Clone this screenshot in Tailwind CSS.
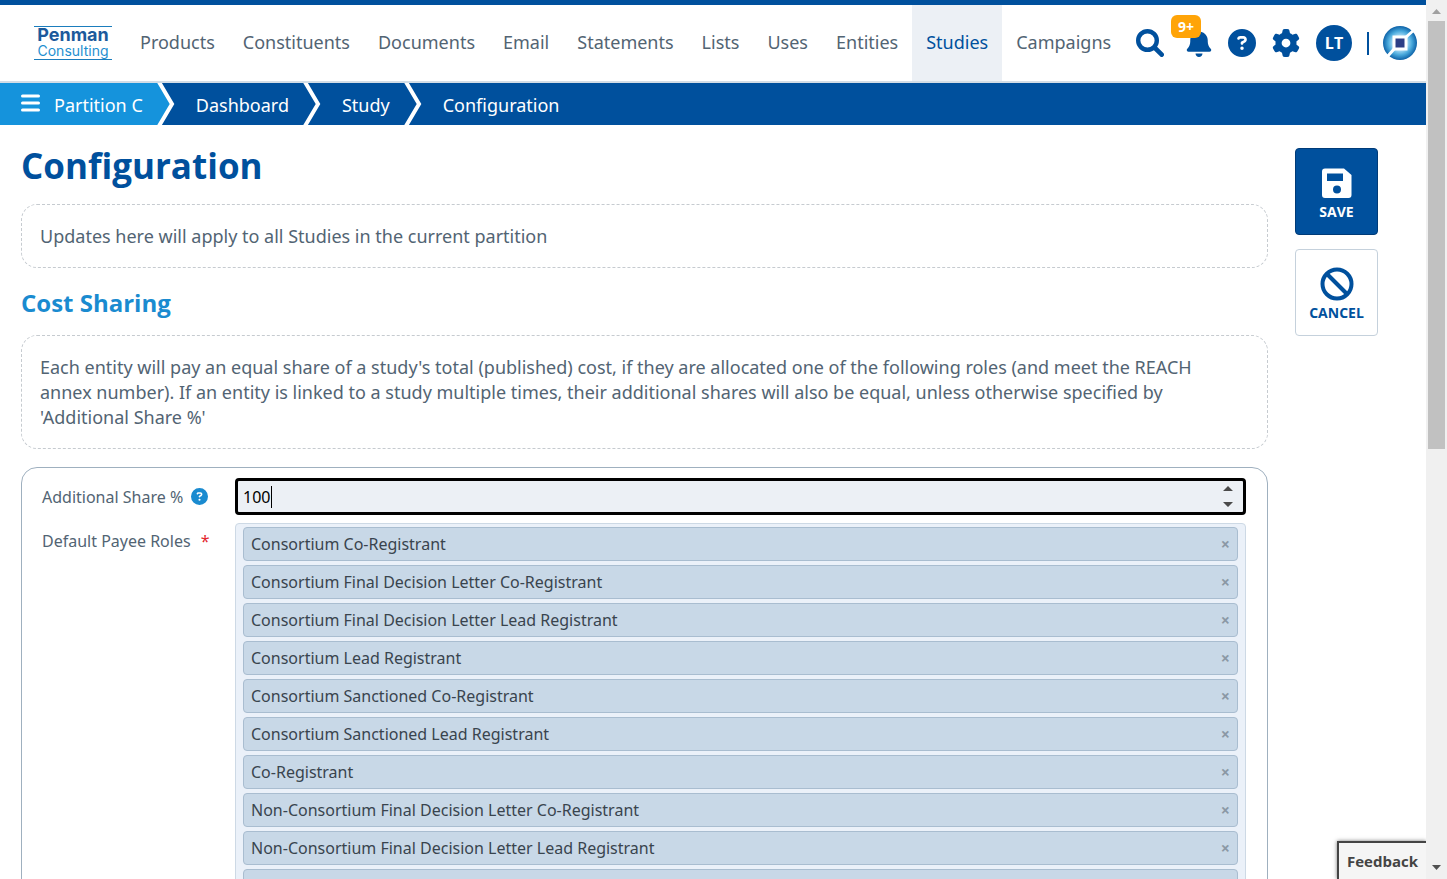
<!DOCTYPE html>
<html lang="en">
<head>
    <meta charset="UTF-8">
    <meta name="viewport" content="width=device-width, initial-scale=1.0">
    <title>Configuration</title>
    <script src="https://cdn.jsdelivr.net/npm/@tailwindcss/browser@4"></script>
    <style>
        input[type=number]::-webkit-inner-spin-button,
        input[type=number]::-webkit-outer-spin-button { -webkit-appearance: none; margin: 0; }
        input[type=number] { -moz-appearance: textfield; appearance: textfield; }
    </style>
</head>
<body class="flex h-screen overflow-hidden bg-white font-['Noto_Sans',sans-serif] text-lg text-[#526473]">
    <div class="relative flex h-screen min-w-0 flex-1 flex-col overflow-hidden">
        <!-- Top navigation -->
        <header class="flex h-[83px] shrink-0 items-stretch border-t-5 border-b-2 border-t-[#00509d] border-b-[#d3dde6]">
            <a href="#" class="mr-3.5 ml-[34px] flex h-[34px] w-[78px] flex-col justify-center self-center border-y border-[#1b7dbd] font-['Inter',sans-serif]">
                <span class="text-center text-lg leading-4 font-bold text-[#1c5a9c]">Penman</span>
                <span class="text-center text-sm leading-4 text-[#1f8fd0]">Consulting</span>
            </a>
            <nav class="flex">
                <a href="#" class="flex items-center px-3.5 pb-0.5">Products</a>
                <a href="#" class="flex items-center px-3.5 pb-0.5">Constituents</a>
                <a href="#" class="flex items-center px-3.5 pb-0.5">Documents</a>
                <a href="#" class="flex items-center px-3.5 pb-0.5">Email</a>
                <a href="#" class="flex items-center px-3.5 pb-0.5">Statements</a>
                <a href="#" class="flex items-center px-3.5 pb-0.5">Lists</a>
                <a href="#" class="flex items-center px-3.5 pb-0.5">Uses</a>
                <a href="#" class="flex items-center px-3.5 pb-0.5">Entities</a>
                <a href="#" class="flex items-center bg-[#ecf0f5] px-3.5 pb-0.5 text-[#00509d]">Studies</a>
                <a href="#" class="flex items-center px-3.5 pb-0.5">Campaigns</a>
            </nav>
            <div class="ml-auto flex items-center pr-[9px] font-['Open_Sans',sans-serif] text-[#00509d]">
                <button type="button" aria-label="Search" class="mr-[22px]">
                    <svg class="size-7" viewBox="0 0 28 28" fill="none" stroke="currentColor" stroke-linecap="round"><circle cx="11.500" cy="11.500" r="9.300" stroke-width="4.400"/><path d="M18.500 18.500L25.700 25.700" stroke-width="4.600"/></svg>
                </button>
                <button type="button" aria-label="Notifications" class="relative mr-4">
                    <svg class="h-7 w-[26px]" viewBox="0 0 448 512" fill="currentColor"><path d="M224 0c-17.700 0-32 14.300-32 32V51.200C119 66 64 130.600 64 208v18.800c0 47-17.300 92.400-48.500 127.600l-7.400 8.300c-8.400 9.400-10.400 22.900-5.300 34.400S19.400 416 32 416H416c12.600 0 24-7.400 29.200-18.900s3.100-25-5.300-34.400l-7.400-8.300C401.300 319.200 384 273.900 384 226.800V208c0-77.400-55-142-128-156.800V32c0-17.700-14.300-32-32-32zm45.300 493.300c12-12 18.700-28.300 18.700-45.300H160c0 17 6.700 33.300 18.700 45.300s28.300 18.700 45.300 18.700s33.300-6.700 45.300-18.700z"/></svg>
                    <span class="absolute -top-3.5 -left-[15px] rounded-md bg-[#ffa408] px-[7px] text-sm leading-[23px] font-bold text-white">9+</span>
                </button>
                <button type="button" aria-label="Help" class="mr-4">
                    <svg class="size-7" viewBox="0 0 512 512" fill="currentColor"><path d="M256 512A256 256 0 1 0 256 0a256 256 0 1 0 0 512zM169.800 165.300c7.900-22.300 29.100-37.300 52.800-37.300h58.300c34.900 0 63.100 28.300 63.100 63.100c0 22.600-12.100 43.500-31.700 54.800L280 264.400c-.2 13-10.900 23.600-24 23.600c-13.300 0-24-10.700-24-24V250.500c0-8.600 4.600-16.500 12.100-20.800l44.300-25.400c4.700-2.700 7.600-7.700 7.600-13.100c0-8.400-6.800-15.100-15.100-15.100H222.600c-3.400 0-6.400 2.100-7.500 5.300l-.4 1.200c-4.400 12.500-18.200 19-30.600 14.600s-19-18.200-14.600-30.600l.3-1.300zM224 352a32 32 0 1 1 64 0 32 32 0 1 1 -64 0z"/></svg>
                </button>
                <button type="button" aria-label="Settings" class="mr-4">
                    <svg class="size-7" viewBox="0 0 512 512" fill="currentColor"><path d="M495.900 166.600c3.200 8.700 .5 18.400-6.400 24.600l-43.300 39.400c1.100 8.300 1.700 16.800 1.700 25.400s-.6 17.100-1.700 25.400l43.300 39.400c6.900 6.200 9.600 15.900 6.400 24.600c-4.400 11.900-9.700 23.300-15.800 34.300l-4.700 8.100c-6.600 11-14 21.400-22.100 31.200c-5.900 7.200-15.700 9.600-24.500 6.800l-55.700-17.700c-13.400 10.300-28.200 18.900-44 25.400l-12.500 57.100c-2 9.100-9 16.300-18.200 17.800c-13.800 2.300-28 3.500-42.500 3.500s-28.700-1.200-42.500-3.500c-9.200-1.500-16.200-8.700-18.200-17.800l-12.500-57.100c-15.800-6.500-30.600-15.100-44-25.400L83.100 425.900c-8.800 2.800-18.600 .3-24.500-6.800c-8.100-9.800-15.500-20.200-22.100-31.200l-4.700-8.100c-6.100-11-11.400-22.400-15.800-34.300c-3.200-8.700-.5-18.400 6.400-24.600l43.300-39.400C64.600 273.100 64 264.600 64 256s.6-17.100 1.700-25.400L22.400 191.200c-6.900-6.200-9.600-15.900-6.400-24.600c4.400-11.900 9.700-23.300 15.800-34.300l4.700-8.100c6.600-11 14-21.400 22.100-31.200c5.900-7.200 15.700-9.600 24.500-6.800l55.700 17.700c13.400-10.300 28.200-18.900 44-25.400l12.500-57.100c2-9.100 9-16.300 18.200-17.800C227.300 1.200 241.500 0 256 0s28.700 1.200 42.500 3.500c9.200 1.500 16.200 8.700 18.200 17.800l12.500 57.100c15.800 6.500 30.600 15.100 44 25.400l55.700-17.700c8.800-2.800 18.600-.3 24.500 6.800c8.100 9.800 15.500 20.200 22.100 31.200l4.700 8.100c6.100 11 11.400 22.400 15.800 34.300zM256 336a80 80 0 1 0 0-160 80 80 0 1 0 0 160z"/></svg>
                </button>
                <button type="button" class="flex size-9 items-center justify-center rounded-full bg-[#00509d] text-base font-bold text-white">LT</button>
                <span class="mr-3.5 ml-[15px] h-[23px] w-0.5 bg-[#00509d]"></span>
                <a href="#" aria-label="Home">
                    <svg class="size-[34px]" viewBox="0 0 34 34">
                        <defs>
                            <radialGradient id="orb">
                                <stop offset="0.35" stop-color="#bfe6fa"/>
                                <stop offset="0.7" stop-color="#49a9dc"/>
                                <stop offset="1" stop-color="#0d62a8"/>
                            </radialGradient>
                        </defs>
                        <circle cx="17" cy="17" r="17" fill="url(#orb)"/>
                        <path d="M22 12L31 4M12 22L4 31" stroke="#fff" stroke-width="3"/>
                        <rect x="11" y="11" width="12" height="12" fill="#2c3e86" stroke="#fff" stroke-width="3"/>
                    </svg>
                </a>
            </div>
        </header>

        <!-- Breadcrumbs -->
        <nav aria-label="Breadcrumb" class="flex h-[42px] shrink-0 items-stretch bg-[#00509d] text-white">
            <a href="#" class="flex items-center bg-[#1593dc] pt-0.5 pr-px pl-[21px]">
                <svg class="mr-3.5 mb-1 h-[18px] w-[19px]" viewBox="0 0 19 18" stroke="#fff" stroke-width="3" stroke-linecap="round"><path d="M1.500 2h16M1.500 9h16M1.500 16h16"/></svg>
                Partition C
            </a>
            <svg class="h-[42px] w-[34px]" viewBox="0 0 34 42" fill="none"><path d="M0 0H15L29 21L15 42H0Z" fill="#1593dc"/><path d="M15 -1L28 21L15 43" stroke="#fff" stroke-width="4"/></svg>
            <a href="#" class="flex items-center pt-0.5 pr-px pl-[18px]">Dashboard</a>
            <svg class="h-[42px] w-[34px]" viewBox="0 0 34 42" fill="none"><path d="M15 -1L28 21L15 43" stroke="#fff" stroke-width="4"/></svg>
            <a href="#" class="flex items-center pt-0.5 pr-px pl-[18px]">Study</a>
            <svg class="h-[42px] w-[34px]" viewBox="0 0 34 42" fill="none"><path d="M15 -1L28 21L15 43" stroke="#fff" stroke-width="4"/></svg>
            <a href="#" class="flex items-center pt-0.5 pr-px pl-[18px]">Configuration</a>
        </nav>

        <div class="flex gap-[27px] pr-12 pl-[21px]">
            <main class="min-w-0 flex-1">
                <h1 class="mt-4 font-['Open_Sans',sans-serif] text-[35px] leading-[50px] font-bold text-[#00509d]">Configuration</h1>
                <p class="mt-[13px] rounded-2xl border border-dashed border-[#c6cbd0] pt-[19px] pr-12 pb-[18px] pl-[18px] leading-[25px]">Updates here will apply to all Studies in the current partition</p>

                <h2 class="mt-[18px] font-['Open_Sans',sans-serif] text-2xl leading-[34px] font-bold text-[#1a8bd0]">Cost Sharing</h2>
                <p class="mt-[15px] rounded-2xl border border-dashed border-[#c6cbd0] pt-[19px] pr-12 pb-[18px] pl-[18px] leading-[25px]">Each entity will pay an equal share of a study's total (published) cost, if they are allocated one of the following roles (and meet the REACH annex number). If an entity is linked to a study multiple times, their additional shares will also be equal, unless otherwise specified by 'Additional Share %'</p>

                <form class="mt-[18px] rounded-t-2xl border border-[#9fb0bf] pt-2.5 pr-[21px] pl-5 text-base">
                    <div class="flex items-center">
                        <div class="flex w-[193px] shrink-0 items-center gap-2">
                            <label for="share">Additional Share %</label>
                            <svg class="size-[17px] text-[#1a8bd0]" viewBox="0 0 512 512" fill="currentColor"><path d="M256 512A256 256 0 1 0 256 0a256 256 0 1 0 0 512zM169.800 165.300c7.900-22.300 29.100-37.300 52.800-37.300h58.300c34.900 0 63.100 28.300 63.100 63.100c0 22.600-12.100 43.500-31.700 54.800L280 264.400c-.2 13-10.900 23.600-24 23.600c-13.300 0-24-10.700-24-24V250.500c0-8.600 4.600-16.500 12.100-20.800l44.300-25.400c4.700-2.700 7.600-7.700 7.600-13.100c0-8.400-6.800-15.100-15.100-15.100H222.600c-3.400 0-6.400 2.100-7.500 5.300l-.4 1.200c-4.400 12.500-18.200 19-30.600 14.600s-19-18.200-14.600-30.600l.3-1.300zM224 352a32 32 0 1 1 64 0 32 32 0 1 1 -64 0z"/></svg>
                        </div>
                        <div class="relative min-w-0 flex-1">
                            <input id="share" type="number" value="100" class="block h-[37px] w-full rounded border-[3px] border-black bg-[#ecf0f5] px-[5px] text-base text-black caret-transparent outline-none">
                            <span class="absolute top-2 left-[36px] h-[22px] w-px bg-black"></span>
                            <svg class="absolute top-2 right-3 h-[21px] w-3" viewBox="0 0 12 21" fill="#4a4a4a"><path d="M1 5L6 0L11 5ZM1 16L6 21L11 16Z"/></svg>
                        </div>
                    </div>
                    <div class="mt-2 flex items-start">
                        <span id="roles-label" class="w-[193px] shrink-0 pt-1.5">Default Payee Roles <span class="ml-1.5 text-[#e3262e]">*</span></span>
                        <ul aria-labelledby="roles-label" class="flex min-w-0 flex-1 flex-col gap-1 rounded-t border border-[#cdd9e5] bg-[#ebf1f9] px-[7px] pt-[3px] pb-[7px] text-[#39444e]">
                            <li class="flex h-[34px] items-center justify-between rounded border border-[#a9bdd0] bg-[#c8d8e7] px-[7px]">Consortium Co-Registrant<button type="button" aria-label="Remove" class="text-base font-bold text-[#8b98a5]">×</button></li>
                            <li class="flex h-[34px] items-center justify-between rounded border border-[#a9bdd0] bg-[#c8d8e7] px-[7px]">Consortium Final Decision Letter Co-Registrant<button type="button" aria-label="Remove" class="text-base font-bold text-[#8b98a5]">×</button></li>
                            <li class="flex h-[34px] items-center justify-between rounded border border-[#a9bdd0] bg-[#c8d8e7] px-[7px]">Consortium Final Decision Letter Lead Registrant<button type="button" aria-label="Remove" class="text-base font-bold text-[#8b98a5]">×</button></li>
                            <li class="flex h-[34px] items-center justify-between rounded border border-[#a9bdd0] bg-[#c8d8e7] px-[7px]">Consortium Lead Registrant<button type="button" aria-label="Remove" class="text-base font-bold text-[#8b98a5]">×</button></li>
                            <li class="flex h-[34px] items-center justify-between rounded border border-[#a9bdd0] bg-[#c8d8e7] px-[7px]">Consortium Sanctioned Co-Registrant<button type="button" aria-label="Remove" class="text-base font-bold text-[#8b98a5]">×</button></li>
                            <li class="flex h-[34px] items-center justify-between rounded border border-[#a9bdd0] bg-[#c8d8e7] px-[7px]">Consortium Sanctioned Lead Registrant<button type="button" aria-label="Remove" class="text-base font-bold text-[#8b98a5]">×</button></li>
                            <li class="flex h-[34px] items-center justify-between rounded border border-[#a9bdd0] bg-[#c8d8e7] px-[7px]">Co-Registrant<button type="button" aria-label="Remove" class="text-base font-bold text-[#8b98a5]">×</button></li>
                            <li class="flex h-[34px] items-center justify-between rounded border border-[#a9bdd0] bg-[#c8d8e7] px-[7px]">Non-Consortium Final Decision Letter Co-Registrant<button type="button" aria-label="Remove" class="text-base font-bold text-[#8b98a5]">×</button></li>
                            <li class="flex h-[34px] items-center justify-between rounded border border-[#a9bdd0] bg-[#c8d8e7] px-[7px]">Non-Consortium Final Decision Letter Lead Registrant<button type="button" aria-label="Remove" class="text-base font-bold text-[#8b98a5]">×</button></li>
                            <li class="flex h-[34px] items-center justify-between rounded border border-[#a9bdd0] bg-[#c8d8e7] px-[7px]">Non-Consortium Lead Registrant<button type="button" aria-label="Remove" class="text-base font-bold text-[#8b98a5]">×</button></li>
                        </ul>
                    </div>
                </form>
            </main>

            <!-- Page actions -->
            <aside class="flex w-[83px] shrink-0 flex-col gap-3.5 pt-[23px] font-['Open_Sans',sans-serif] text-sm font-bold">
                <button type="button" class="flex h-[87px] flex-col items-center justify-center gap-0.5 rounded border border-[#003b78] bg-[#00509d] pt-[5px] text-white">
                    <svg class="size-[34px]" viewBox="0 0 34 34" fill="currentColor" fill-rule="evenodd"><path d="M5 2.500H24L31.500 9V29A3 3 0 0 1 28.500 32H5A3 3 0 0 1 2 29V5.500A3 3 0 0 1 5 2.500ZM7 7.500V15H23V7.500ZM17 19.500A4 4 0 1 0 17 27.500A4 4 0 1 0 17 19.500Z"/></svg>
                    SAVE
                </button>
                <button type="button" class="flex h-[87px] flex-col items-center justify-center gap-0.5 rounded border border-[#c5d1dc] bg-white pt-[5px] text-[#00509d]">
                    <svg class="size-[34px]" viewBox="0 0 34 34" fill="none" stroke="currentColor" stroke-width="4"><circle cx="17" cy="17" r="14.500"/><path d="M7 7L27 27"/></svg>
                    CANCEL
                </button>
            </aside>
        </div>

        <button type="button" class="absolute right-0 bottom-0 h-[38px] border-t-2 border-l-2 border-[#444] bg-[#f5f5f5] px-2 pt-0.5 font-['Open_Sans',sans-serif] text-[15px] font-bold text-[#444] shadow-[0_0_4px_#0008]">Feedback</button>
    </div>

    <!-- Window scrollbar -->
    <div class="flex w-[21px] shrink-0 flex-col items-center bg-[#f0f0f0]">
        <svg class="h-[21px] w-[9px]" viewBox="0 0 9 21" fill="#a0a0a0"><path d="M0 14L4.500 9L9 14Z"/></svg>
        <div class="h-[428px] w-[17px] bg-[#c1c1c1]"></div>
        <svg class="mt-auto h-[21px] w-[9px]" viewBox="0 0 9 21" fill="#505050"><path d="M0 7L4.500 12L9 7Z"/></svg>
    </div>
</body>
</html>
